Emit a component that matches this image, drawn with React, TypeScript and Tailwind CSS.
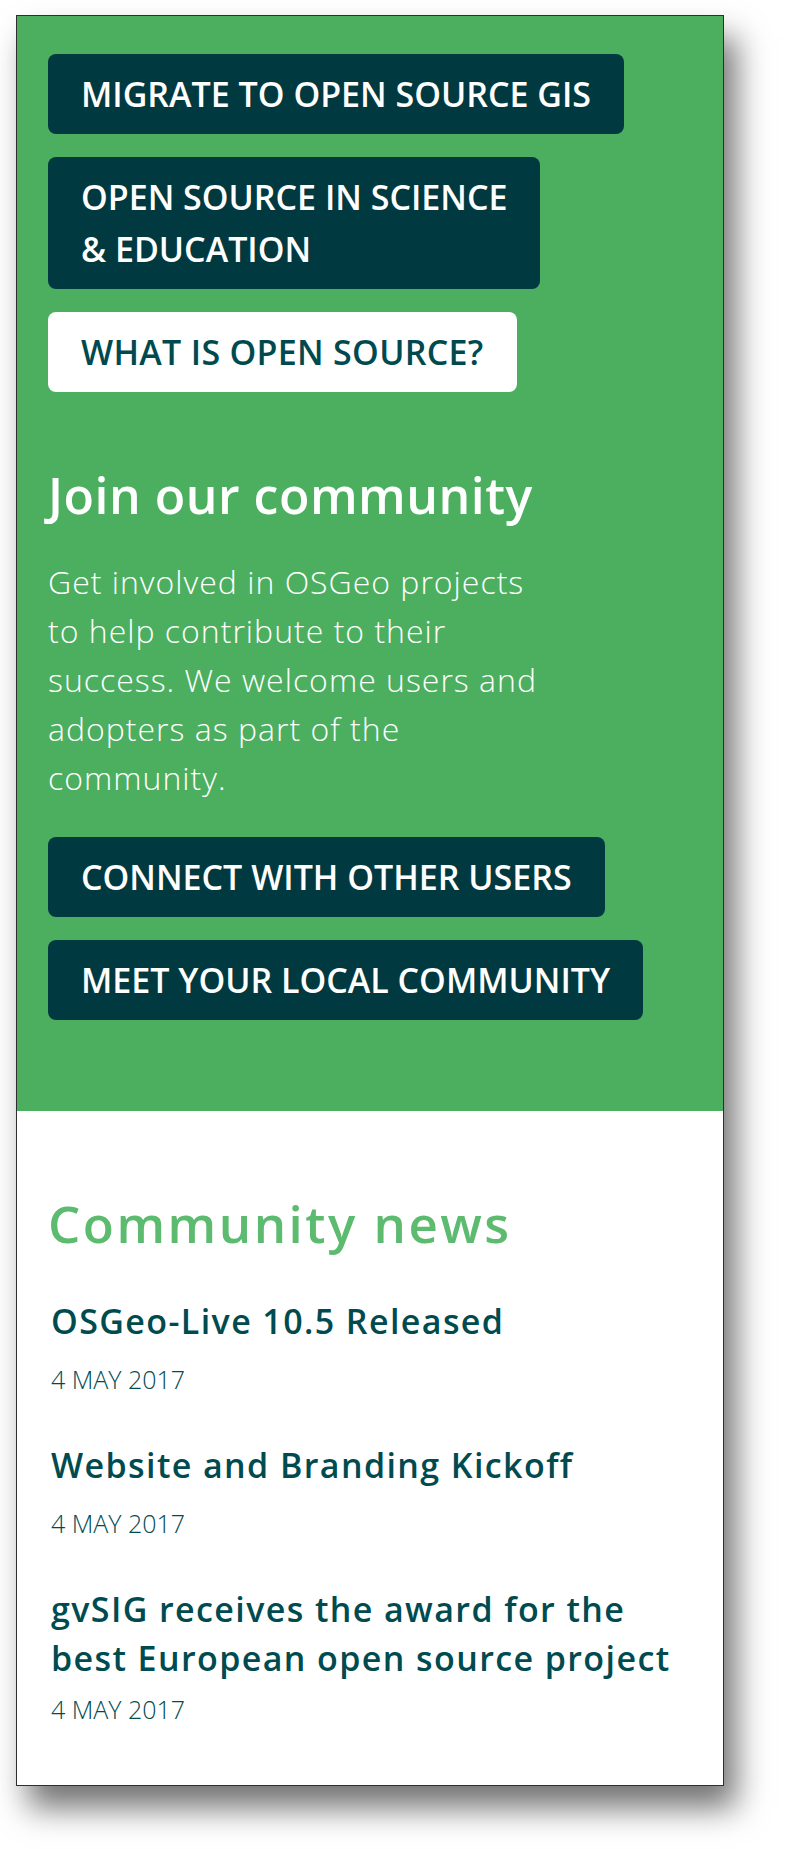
import React from "react";

const news = [
  { title: ["OSGeo-Live 10.5 Released"], date: "4 MAY 2017", dateGap: "mt-[15px]" },
  { title: ["Website and Branding Kickoff"], date: "4 MAY 2017", dateGap: "mt-[15px]" },
  {
    title: ["gvSIG receives the award for the", "best European open source project"],
    date: "4 MAY 2017",
    dateGap: "mt-[8px]",
  },
];

const DarkButton = ({ lines }: { lines: string[] }) => (
  <a
    href="#"
    className="inline-block rounded-[8px] bg-[#003a40] px-[33px] py-[14px] text-[34px] font-semibold leading-[52px] text-white"
  >
    {lines.map((l, i) => (
      <span key={i} className="block">
        {l}
      </span>
    ))}
  </a>
);

const App = () => {
  return (
    <div className="min-h-[1849px] w-full bg-white pl-[16px] pt-[15px] font-['Open_Sans',sans-serif]">
      <div className="w-[708px] border border-[#2e2e2e] bg-white shadow-[12px_22px_30px_rgba(0,0,0,0.55)]">
        {/* Green intro */}
        <section className="bg-[#4caf5f] px-[31px] pb-[91px] pt-[38px]">
          <div className="flex flex-col items-start gap-[23px]">
            <DarkButton lines={["MIGRATE TO OPEN SOURCE GIS"]} />
            <DarkButton lines={["OPEN SOURCE IN SCIENCE", "& EDUCATION"]} />
            <a
              href="#"
              className="inline-block rounded-[8px] bg-white px-[33px] py-[14px] text-[34px] font-semibold leading-[52px] tracking-[0.3px] text-[#004a4f]"
            >
              WHAT IS OPEN SOURCE?
            </a>
          </div>

          <h2 className="mt-[73px] text-[50px] font-semibold leading-[60px] tracking-[0.5px] text-white">
            Join our community
          </h2>
          <p className="mt-[32px] text-[32px] font-light leading-[49px] tracking-[1px] text-white">
            Get involved in OSGeo projects
            <br />
            to help contribute to their
            <br />
            success. We welcome users and
            <br />
            adopters as part of the
            <br />
            community.
          </p>

          <div className="mt-[35px] flex flex-col items-start gap-[23px]">
            <DarkButton lines={["CONNECT WITH OTHER USERS"]} />
            <DarkButton lines={["MEET YOUR LOCAL COMMUNITY"]} />
          </div>
        </section>

        {/* News */}
        <section className="px-[31px] pb-[58px] pt-[82px]">
          <h2 className="text-[51px] font-semibold leading-[60px] tracking-[2.5px] text-[#5cbb6f]">
            Community news
          </h2>
          <div className="mt-[44px] flex flex-col gap-[44px]">
            {news.map((item, i) => (
              <div key={i} className="pl-[3px]">
                <h3 className="text-[34px] font-semibold leading-[49px] tracking-[1.4px] text-[#004b50]">
                  {item.title.map((t, j) => (
                    <span key={j} className="block">
                      {t}
                    </span>
                  ))}
                </h3>
                <p className={`${item.dateGap} text-[25px] font-light leading-[36px] text-[#004b50]`}>
                  {item.date}
                </p>
              </div>
            ))}
          </div>
        </section>
      </div>
    </div>
  );
};

export default App;
